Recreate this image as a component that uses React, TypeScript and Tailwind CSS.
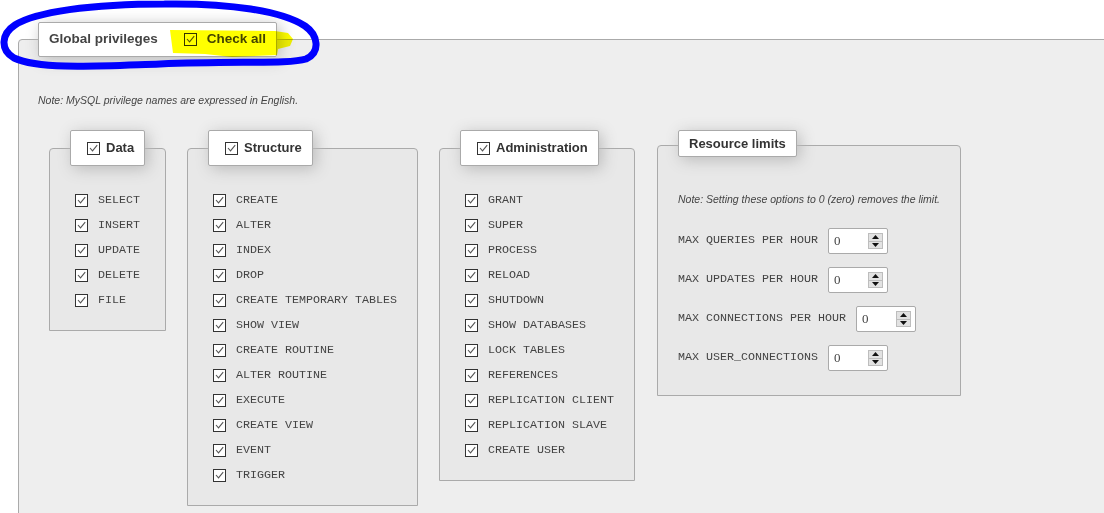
import React from 'react';

const sans = "font-['Liberation_Sans',Arial,sans-serif]";
const mono = "font-['Liberation_Mono','Courier_New',monospace]";

// small ticked checkbox used everywhere on the form
const Tick: React.FC = () => (
  <span className="inline-flex h-[13px] w-[13px] shrink-0 items-center justify-center border border-[#333] bg-white">
    <svg width="11" height="11" viewBox="0 0 11 11">
      <path d="M2 5 L4.5 7.8 L9.2 2.2" fill="none" stroke="#555" strokeWidth="1.1" />
    </svg>
  </span>
);

// number input with the native-looking up/down spinner
const NumberBox: React.FC = () => (
  <span className="ml-[10px] flex h-[26px] w-[60px] items-center rounded-[2px] border border-[#aaa] bg-white pl-[5px] pr-[4px]">
    <span className="font-['Liberation_Serif','Times_New_Roman',serif] text-[13px] text-[#444]">0</span>
    <span className="ml-auto flex h-[16px] w-[15px] flex-col border border-[#bdbdbd] bg-[#e2e2e2]">
      <span className="flex flex-1 items-center justify-center border-b border-[#bdbdbd]">
        <svg width="7" height="4" viewBox="0 0 7 4"><path d="M0 4 L3.5 0 L7 4 Z" fill="#111" /></svg>
      </span>
      <span className="flex flex-1 items-center justify-center">
        <svg width="7" height="4" viewBox="0 0 7 4"><path d="M0 0 L3.5 4 L7 0 Z" fill="#111" /></svg>
      </span>
    </span>
  </span>
);

interface GroupProps {
  title: string;
  items: string[];
  width: string;
}

// one privilege group: legend straddling the top border, list of checkboxes
const PrivGroup: React.FC<GroupProps> = ({ title, items, width }) => (
  <div className={`flex flex-col ${width}`}>
    <div className="relative z-10 ml-[21px] flex h-[36px] items-center self-start rounded-[2px] border border-[#aaa] bg-white pl-[16px] pr-[10px] shadow-[3px_3px_15px_#bbb]">
      <Tick />
      <span className={`ml-[6px] text-[13px] font-bold text-[#333] ${sans}`}>{title}</span>
    </div>
    <div className="-mt-[18px] rounded-t-[4px] border border-[#aaa] bg-[#e8e8e8] pl-[25px] pt-[39px] pb-[17px]">
      {items.map(item => (
        <div key={item} className="flex h-[25px] items-center">
          <Tick />
          <span className={`ml-[10px] text-[11.67px] text-[#444] ${mono}`}>{item}</span>
        </div>
      ))}
    </div>
  </div>
);

const dataPrivs = ['SELECT', 'INSERT', 'UPDATE', 'DELETE', 'FILE'];
const structurePrivs = [
  'CREATE', 'ALTER', 'INDEX', 'DROP', 'CREATE TEMPORARY TABLES', 'SHOW VIEW',
  'CREATE ROUTINE', 'ALTER ROUTINE', 'EXECUTE', 'CREATE VIEW', 'EVENT', 'TRIGGER',
];
const adminPrivs = [
  'GRANT', 'SUPER', 'PROCESS', 'RELOAD', 'SHUTDOWN', 'SHOW DATABASES', 'LOCK TABLES',
  'REFERENCES', 'REPLICATION CLIENT', 'REPLICATION SLAVE', 'CREATE USER',
];
const limits = ['MAX QUERIES PER HOUR', 'MAX UPDATES PER HOUR', 'MAX CONNECTIONS PER HOUR', 'MAX USER_CONNECTIONS'];

export default function App() {
  return (
    <div className={`relative h-[513px] w-[1104px] overflow-hidden bg-white ${sans}`}>
      <div className="ml-[18px] mt-[22px] flex w-[1100px] flex-col">
        {/* Global privileges legend */}
        <div className="relative z-10 ml-[20px] flex h-[35px] items-center self-start rounded-[2px] border border-[#aaa] bg-white px-[10px] shadow-[3px_3px_15px_#bbb]">
          <span className="text-[13.5px] font-bold text-[#444]">Global privileges</span>
          <span className="ml-[26px]"><Tick /></span>
          <span className="ml-[10px] text-[13.5px] font-bold text-[#444]">Check all</span>
        </div>

        <div className="-mt-[18px] rounded-tl-[4px] border border-[#aaa] bg-[#eee] pb-[40px] pl-[19px] pt-[53px]">
          <p className="text-[10.5px] italic leading-[14px] text-[#444]">
            Note: MySQL privilege names are expressed in English.
          </p>

          <div className="ml-[11px] mt-[23px] flex items-start gap-[21px]">
            <PrivGroup title="Data" items={dataPrivs} width="w-[117px]" />
            <PrivGroup title="Structure" items={structurePrivs} width="w-[231px]" />
            <PrivGroup title="Administration" items={adminPrivs} width="w-[196px]" />

            {/* resource limits */}
            <div className="ml-[1px] flex w-[304px] flex-col">
              <div className="relative z-10 ml-[21px] flex h-[27px] items-center self-start rounded-[2px] border border-[#aaa] bg-white px-[10px] shadow-[3px_3px_15px_#bbb]">
                <span className="text-[13px] font-bold text-[#333]">Resource limits</span>
              </div>
              <div className="-mt-[12px] rounded-t-[4px] border border-[#aaa] bg-[#e8e8e8] pb-[24px] pl-[20px] pt-[46px]">
                <p className="text-[10.5px] italic leading-[14px] text-[#444]">
                  Note: Setting these options to 0 (zero) removes the limit.
                </p>
                <div className="mt-[22px] flex flex-col gap-[13px]">
                  {limits.map(l => (
                    <div key={l} className="flex h-[26px] items-center">
                      <span className={`text-[11.67px] text-[#444] ${mono}`}>{l}</span>
                      <NumberBox />
                    </div>
                  ))}
                </div>
              </div>
            </div>
          </div>
        </div>
      </div>

      {/* highlighter stroke over "Check all" */}
      <svg className="pointer-events-none absolute left-0 top-0 z-20 mix-blend-multiply" width="330" height="80">
        <path d="M170 30 L275 31 L288 33 L293 39 L290 46 L278 49 L277 55 L232 57 L205 54 L173 53 Z" fill="#ffff00" />
      </svg>

      {/* hand-drawn ring round the legend */}
      <svg className="pointer-events-none absolute left-0 top-0 z-30" width="330" height="80">
        <path
          d="M165 4 C230 3 282 11 305 26 C318 35 321 52 306 59 C290 64 240 61 160 64 C100 66 40 70 14 58 C0 50 1 34 15 25 C35 12 90 4 165 4"
          fill="none"
          stroke="#0000ff"
          strokeWidth="7"
          strokeLinecap="round"
        />
      </svg>
    </div>
  );
}
